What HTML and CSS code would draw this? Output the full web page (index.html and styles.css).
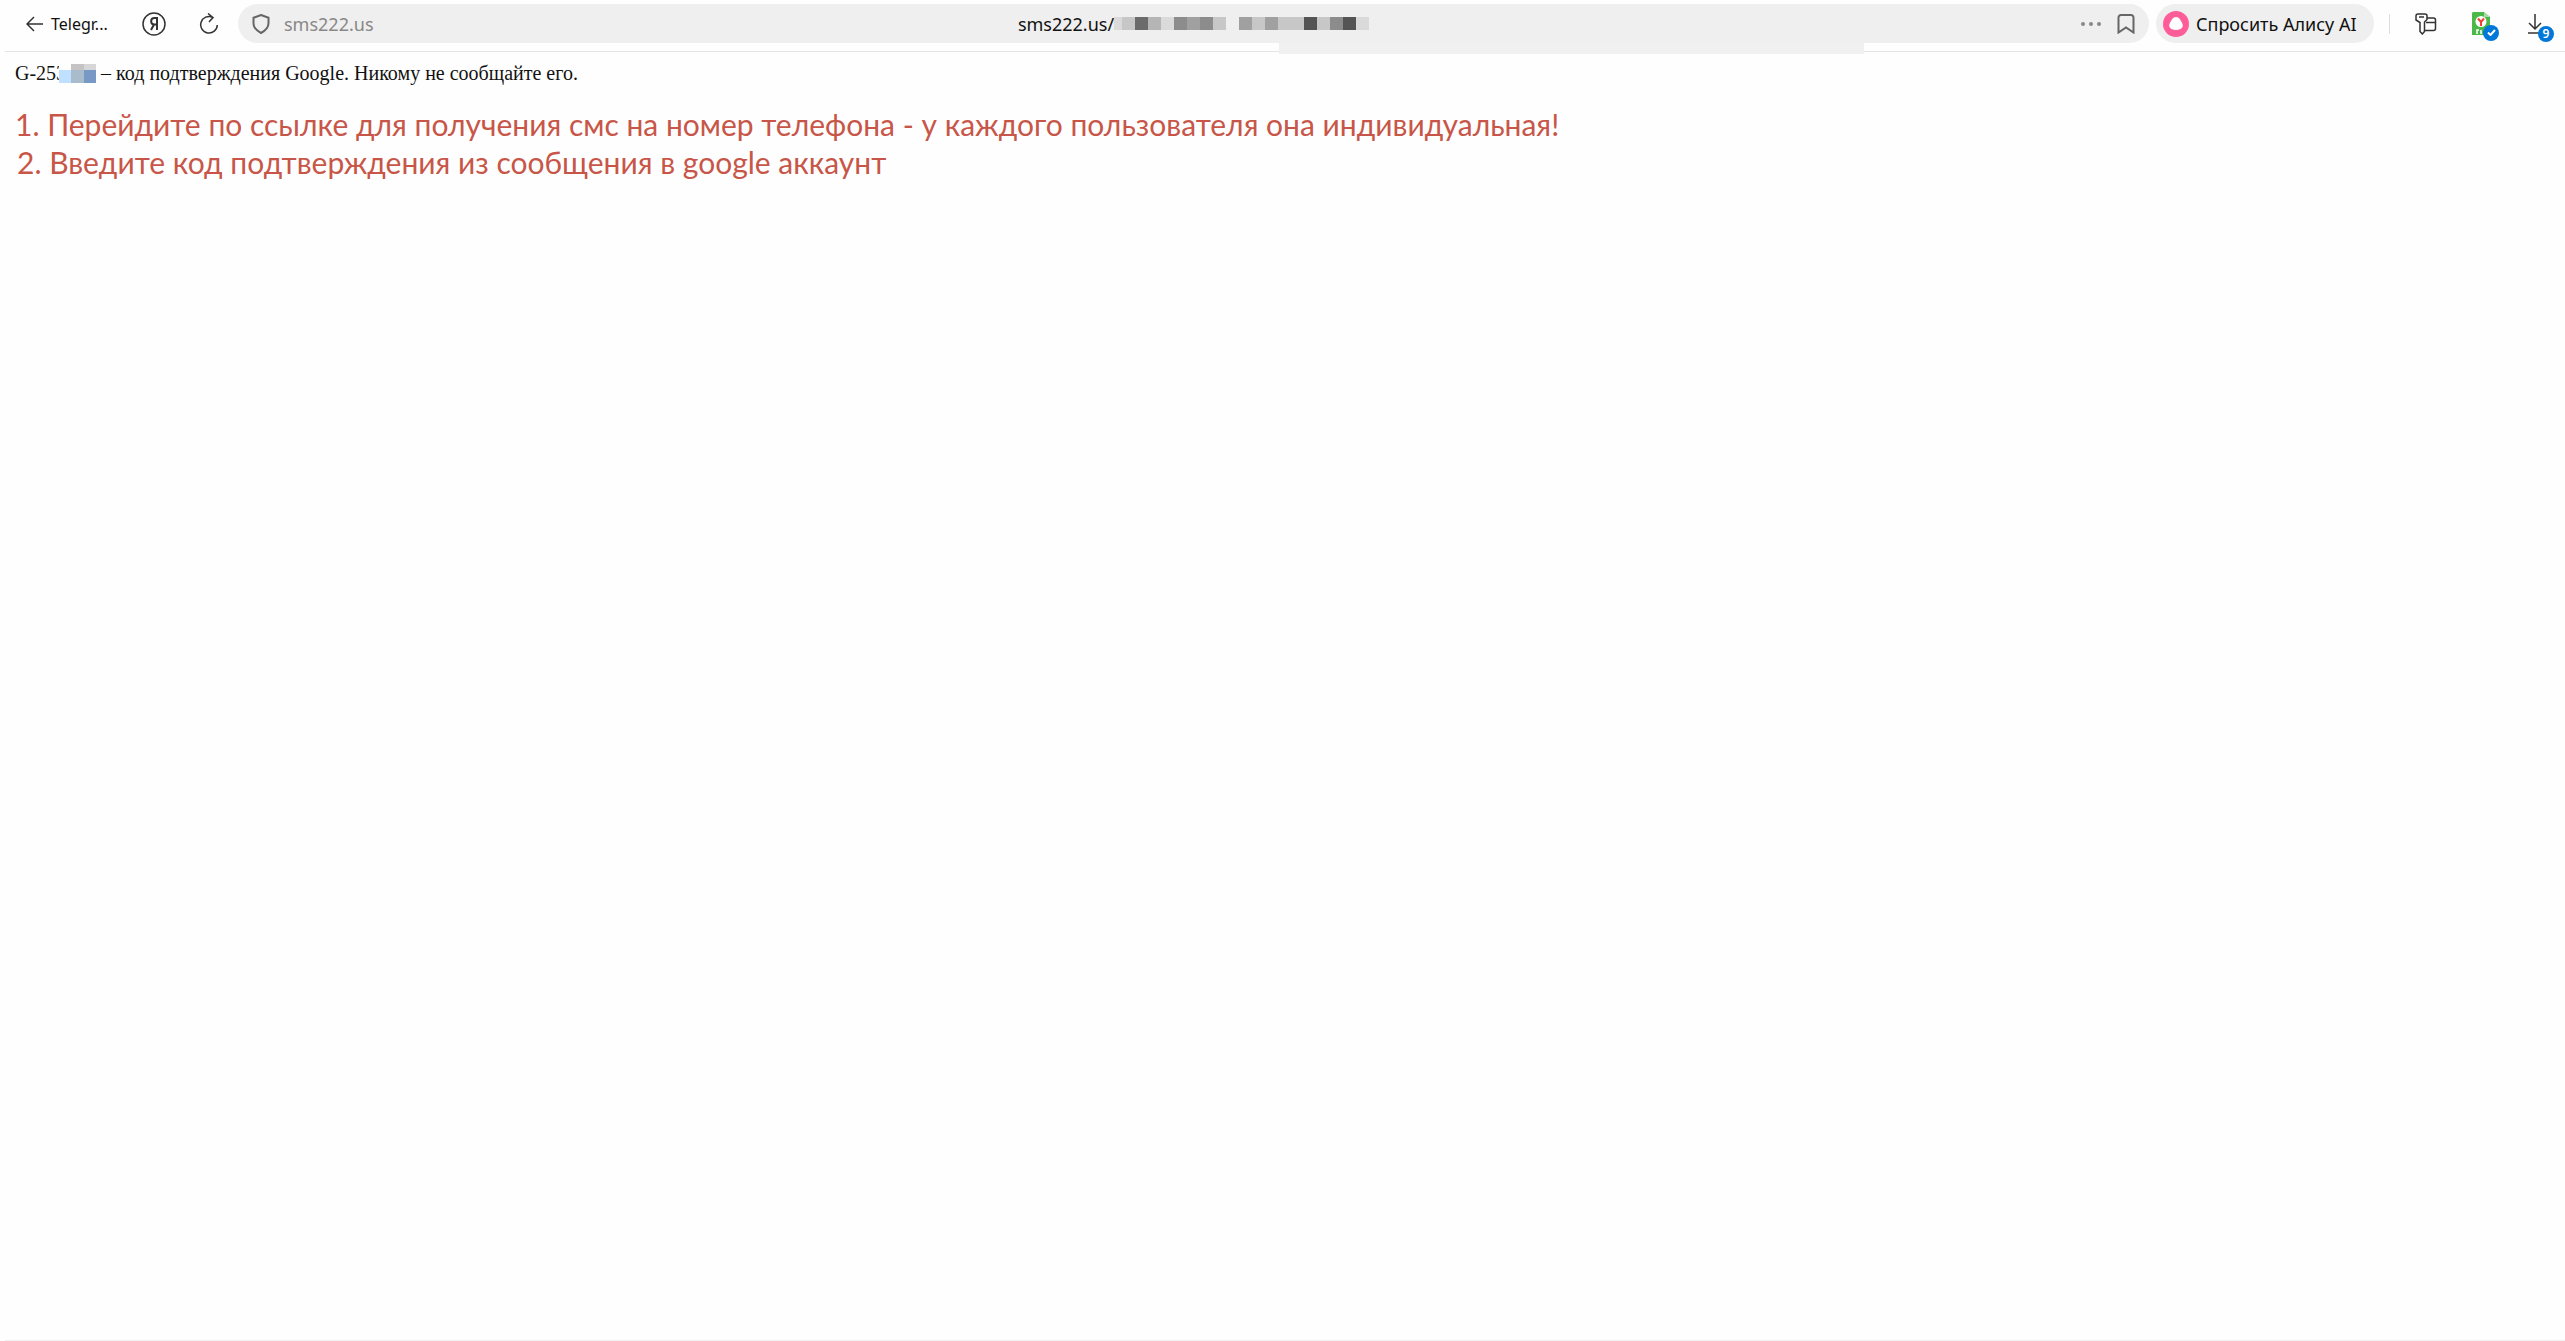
FILE: index.html
```html
<!DOCTYPE html>
<html lang="ru">
<head>
<meta charset="utf-8">
<title>sms222.us</title>
<link rel="stylesheet" href="styles.css">
</head>
<body>
<header class="toolbar">
  <button class="back" type="button">
    <svg width="18" height="16" viewBox="0 0 18 16"><path d="M17 8H1.500M8 1L1 8l7 7"/></svg>
    <span>Telegr...</span>
  </button>
  <button class="home" type="button" aria-label="Яндекс">
    <svg width="24" height="24" viewBox="0 0 24 24"><circle cx="12" cy="12" r="11"/><path d="M15 18V6h-2.500c-4.500 0-4.500 6.500 0 6.500H15M12 12.500L9 18" stroke-width="2"/></svg>
  </button>
  <button class="reload" type="button" aria-label="Обновить">
    <svg width="20" height="22" viewBox="0 0 20 22"><path d="M13.500 4.200A8.300 8.300 0 1 0 18.300 12M9 .5l5 4L10 9"/></svg>
  </button>
  <div class="address">
    <div class="site">
      <svg width="18" height="20" viewBox="0 0 18 20"><path d="M9 1l7.500 2.800v5.500c0 4-2.500 7-7.500 9.700-5-2.700-7.500-5.700-7.500-9.700V3.800z"/></svg>
      <span>sms222.us</span>
    </div>
    <div class="url">
      <span>sms222.us/</span>
      <span class="mosaic" aria-hidden="true"><i class="t1 half"></i><i class="t2"></i><i class="t6"></i><i class="t3"></i><i class="t1"></i><i class="t5"></i><i class="t4"></i><i class="t5"></i><i class="t2"></i><i></i><i class="t4"></i><i class="t2"></i><i class="t4"></i><i class="t2"></i><i class="t2"></i><i class="t7"></i><i class="t2"></i><i class="t5"></i><i class="t7"></i><i class="t1"></i></span>
    </div>
    <div class="actions">
      <button type="button" aria-label="Меню"><svg class="dots" width="20" height="4" viewBox="0 0 20 4"><circle cx="2" cy="2" r="2"/><circle cx="10" cy="2" r="2"/><circle cx="18" cy="2" r="2"/></svg></button>
      <button type="button" aria-label="Закладка"><svg width="18" height="20" viewBox="0 0 18 20"><path d="M4 1h10a2.500 2.500 0 0 1 2.500 2.500V18.500L9 13.500 1.500 18.500V3.500A2.500 2.500 0 0 1 4 1z"/></svg></button>
    </div>
  </div>
  <button class="alice" type="button">
    <svg width="26" height="26" viewBox="0 0 26 26"><circle cx="13" cy="13" r="13" fill="#ff5c98"/><path d="M13 6c2.500 0 3.500 1.500 5 4 1.500 2.700 2.500 4.300 1.300 6.300-1 1.900-3.300 2.700-6.300 2.700s-5.300-.8-6.300-2.700C5.500 14.300 6.500 12.700 8 10c1.500-2.500 2.500-4 5-4z" fill="#fff"/></svg>
    <span>Спросить Алису AI</span>
  </button>
  <span class="divider"></span>
  <div class="tools">
    <button type="button" aria-label="Пароли">
      <svg width="22" height="22" viewBox="0 0 22 22"><path d="M3 1h7q2 0 2 2v3.500L9.500 9v9.500l-2.200 2.500L5 18.500V9.500L1 7V3q0-2 2-2zM4 4h5M12 5h6.500q2 0 2 2v8.500q0 2-2 2h-9M11 9.500h9.500"/></svg>
    </button>
    <button type="button" aria-label="Расширение">
      <svg width="18" height="24" viewBox="0 0 18 24"><path d="M1 0h11l6 5v18H0V1z" fill="#4cb848" stroke="none"/><path d="M12 0v5h6z" fill="#a8dda5" stroke="none"/><circle cx="9" cy="9.500" r="5.500" fill="#fff" stroke="none"/><path d="M6 6.500l3 3.500 3-3.500M9 10v4" stroke="#ef4034" stroke-width="2"/><path d="M5 22v-4h2M9 22v-4" stroke="#fff"/></svg>
      <span class="badge"><svg width="9" height="7" viewBox="0 0 9 7"><path d="M1 3.500L3.500 6 8 1" stroke="#fff" stroke-width="2"/></svg></span>
    </button>
    <button type="button" aria-label="Загрузки">
      <svg width="16" height="22" viewBox="0 0 16 22"><path d="M8 1v15M2 10l6 6 6-6M1 20h14"/></svg>
      <span class="badge">9</span>
    </button>
  </div>
  <div class="patch"></div>
</header>
<main class="page">
  <p class="message">G-253<span class="code-mask" aria-hidden="true"></span> – код подтверждения Google. Никому не сообщайте его.</p>
  <ol class="steps">
    <li>1. Перейдите по ссылке для получения смс на номер телефона - у каждого пользователя она индивидуальная!</li>
    <li>2. Введите код подтверждения из сообщения в google аккаунт</li>
  </ol>
</main>
</body>
</html>
```
FILE: styles.css
```css
* { box-sizing: border-box; }
body {
  margin: 0;
  min-height: 100vh;
  display: flex;
  flex-direction: column;
  background: #fefefe;
  color: #111;
  font-family: "Noto Sans", sans-serif;
}
button {
  display: flex;
  align-items: center;
  padding: 0;
  border: 0;
  background: none;
  color: inherit;
  font: inherit;
}
svg { display: block; flex: none; fill: none; stroke: #333; stroke-width: 1.5; }
.toolbar {
  position: relative;
  display: flex;
  align-items: center;
  height: 52px;
  margin-left: 5px;
  padding: 0 22px 4px 21px;
  border-bottom: 1px solid #e4e4e4;
}
.back { width: 116px; gap: 7px; font-size: 16px; }
.home { width: 57px; }
.reload { width: 39px; }
.address {
  flex: 1;
  display: grid;
  grid-template-columns: 1fr auto 1fr;
  align-items: center;
  height: 39px;
  padding: 0 14px;
  border-radius: 20px;
  background: #efefef;
  font-size: 18px;
}
.address svg { stroke: #666; stroke-width: 2; }
.site, .url, .actions { display: flex; align-items: center; }
.site { gap: 14px; color: #888; }
.actions { justify-content: flex-end; gap: 16px; }
.address .dots { fill: #888; stroke: none; }
.mosaic { display: flex; }
.mosaic i { width: 13px; height: 13px; }
.mosaic .half { width: 8px; }
.t1 { background: #dadada; }
.t2 { background: #c7c7c7; }
.t3 { background: #b5b5b5; }
.t4 { background: #a0a0a0; }
.t5 { background: #8c8c8c; }
.t6 { background: #6b6b6b; }
.t7 { background: #545454; }
.alice {
  width: 218px;
  height: 39px;
  margin-left: 7px;
  padding-left: 7px;
  gap: 7px;
  border-radius: 20px;
  background: #efefef;
  font-size: 18px;
  white-space: nowrap;
}
.alice svg { stroke: none; }
.divider { width: 1px; height: 20px; margin: 0 25px 0 15px; background: #ddd; }
.tools { display: flex; align-items: center; gap: 35px; }
.tools button { position: relative; }
.tools button:last-child { margin-left: 2px; }
.badge {
  position: absolute;
  left: 11px;
  top: 13px;
  display: flex;
  align-items: center;
  justify-content: center;
  width: 16px;
  height: 16px;
  border-radius: 50%;
  background: #0077d9;
  color: #fff;
  font-size: 12px;
  font-weight: 600;
}
.patch {
  position: absolute;
  left: 1274px;
  top: 43px;
  width: 585px;
  height: 11px;
  background: #f0f0f0;
}
.page {
  flex: 1;
  margin-left: 5px;
  padding: 9px 10px;
  border-bottom: 1px solid #f0f0f0;
}
.message {
  display: flex;
  align-items: center;
  margin: 0;
  font: 20px/24px "Liberation Serif", serif;
  white-space: pre;
}
.code-mask {
  position: relative;
  width: 37px;
  height: 19px;
  margin-left: -7px;
  background:
    linear-gradient(90deg, #fefefe 12px, #c5c3c4 12px 25px, #d7d7d8 25px) 0 0 / 100% 6px no-repeat,
    linear-gradient(90deg, #bfe1ff 12px, #a8bccb 12px 25px, #7899c5 25px) 0 6px / 100% 13px no-repeat;
}
.steps {
  margin: 20px 0 0;
  padding: 0;
  list-style: none;
  color: #c85648;
  font-family: Lato, "Noto Sans", sans-serif;
  font-size: 30px;
  line-height: 38px;
}
.steps li + li { padding-left: 2px; }
```
